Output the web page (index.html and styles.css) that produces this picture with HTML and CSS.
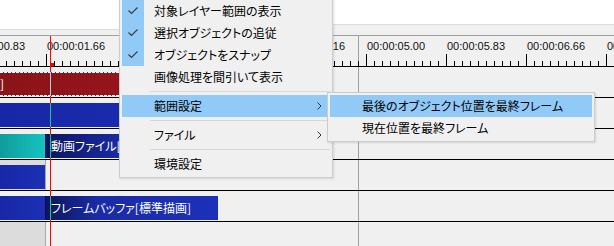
FILE: index.html
```html
<!DOCTYPE html>
<html lang="ja">
<head>
    <meta charset="UTF-8">
    <title>タイムライン</title>
    <link rel="stylesheet" href="styles.css">
</head>
<body>

<div class="timeline">
    <div class="topbar">
        <div class="top-left"></div>
        <div class="top-right"></div>
    </div>

    <!-- 最終フレームの線 -->
    <div class="end-line"></div>

    <div class="ruler">
        <div class="labels">
            <span>00:00:00.83</span>
            <span>00:00:01.66</span>
            <span>00:00:02.50</span>
            <span>00:00:03.33</span>
            <span>00:00:04.16</span>
            <span>00:00:05.00</span>
            <span>00:00:05.83</span>
            <span>00:00:06.66</span>
            <span>00:00:07.50</span>
        </div>
        <div class="ticks"></div>
    </div>

    <div class="layer">
        <div class="obj obj-red obj-cut" style="width: 300px">]<span class="cur cur-cyan" style="left: 50px"></span></div>
    </div>
    <div class="layer">
        <div class="obj obj-blue" style="width: 300px"><span class="cur cur-green" style="left: 50px"></span></div>
    </div>
    <div class="layer">
        <div class="obj obj-teal" style="width: 45px"></div>
        <div class="obj obj-navy" style="width: 255px">動画ファイル[標準描画]<span class="cur cur-green" style="left: 5px"></span></div>
    </div>
    <div class="layer layer-dim">
        <div class="obj obj-blue" style="width: 45px"></div>
    </div>
    <div class="layer">
        <div class="obj obj-blue" style="width: 45px"></div>
        <div class="obj obj-navy" style="width: 173px">フレームバッファ[標準描画]<span class="cur cur-green" style="left: 5px"></span></div>
    </div>
    <div class="layer layer-dim"></div>

    <div class="cursor"><span class="cursor-head"></span></div>
</div>

<div class="menu">
    <div class="item checked">
        <span class="check"><svg width="10" height="8" viewBox="0 0 10 8"><polyline points="0.5,3.5 3.5,6.5 9.5,0.5" fill="none" stroke="#3c3c3c" stroke-width="1.2"/></svg></span>
        <span class="label">対象レイヤー範囲の表示</span>
    </div>
    <div class="item checked">
        <span class="check"><svg width="10" height="8" viewBox="0 0 10 8"><polyline points="0.5,3.5 3.5,6.5 9.5,0.5" fill="none" stroke="#3c3c3c" stroke-width="1.2"/></svg></span>
        <span class="label">選択オブジェクトの追従</span>
    </div>
    <div class="item checked">
        <span class="check"><svg width="10" height="8" viewBox="0 0 10 8"><polyline points="0.5,3.5 3.5,6.5 9.5,0.5" fill="none" stroke="#3c3c3c" stroke-width="1.2"/></svg></span>
        <span class="label">オブジェクトをスナップ</span>
    </div>
    <div class="item">
        <span class="check"></span>
        <span class="label">画像処理を間引いて表示</span>
    </div>
    <div class="sep"></div>
    <div class="item active">
        <span class="check"></span>
        <span class="label">範囲設定</span>
        <svg class="arrow" width="5" height="8" viewBox="0 0 5 8"><polyline points="0.5,0.5 4,4 0.5,7.5" fill="none" stroke="#333" stroke-width="1"/></svg>
    </div>
    <div class="sep"></div>
    <div class="item">
        <span class="check"></span>
        <span class="label">ファイル</span>
        <svg class="arrow" width="5" height="8" viewBox="0 0 5 8"><polyline points="0.5,0.5 4,4 0.5,7.5" fill="none" stroke="#333" stroke-width="1"/></svg>
    </div>
    <div class="sep"></div>
    <div class="item">
        <span class="check"></span>
        <span class="label">環境設定</span>
    </div>
</div>

<div class="menu submenu">
    <div class="item active">
        <span class="check"></span>
        <span class="label">最後のオブジェクト位置を最終フレーム</span>
    </div>
    <div class="item">
        <span class="check"></span>
        <span class="label">現在位置を最終フレーム</span>
    </div>
</div>

</body>
</html>
```

FILE: styles.css
```css
body {
    margin: 0;
    width: 614px;
    height: 246px;
    overflow: hidden;
    background: #f0f0f0;
    font-family: "Noto Sans CJK JP", sans-serif;
    font-feature-settings: "palt";
}
.timeline {
    position: relative;
    height: 246px;
    overflow: hidden;
}
.topbar {
    display: flex;
    height: 35px;
}
.top-left {
    width: 119px;
    height: 29px;
    background: #fff;
    border-bottom: 1px solid #dcdcdc;
}
.top-right {
    flex: 1;
    height: 24px;
    background: #fff;
    border-bottom: 1px solid #dcdcdc;
}
.end-line {
    position: absolute;
    left: 358px;
    top: 36px;
    bottom: 0;
    width: 1px;
    background: #a0a0a0;
}
.ruler {
    position: relative;
    height: 30px;
    border-top: 1px solid #a0a0a0;
    border-bottom: 1px solid #000;
    display: flex;
    flex-direction: column;
    justify-content: space-between;
}
.labels {
    display: flex;
    margin-top: 4px;
    margin-left: -33px;
    font: 11px/12px "Liberation Sans", sans-serif;
    color: #111;
    white-space: nowrap;
}
.labels span {
    flex: 0 0 80px;
}
.ticks {
    height: 12px;
    background-image: linear-gradient(to right, #000 1px, transparent 1px),
                      linear-gradient(to right, #000 1px, transparent 1px);
    background-size: 80px 12px, 8px 5px;
    background-position: 46px 100%, 6px 100%;
    background-repeat: repeat-x;
}
.layer {
    position: relative;
    display: flex;
    align-items: flex-start;
    height: 30px;
    border-bottom: 1px solid #000;
}
.layer-dim {
    background: linear-gradient(to right, #dcdcdc 45px, #a8a8a8 45px 46px, transparent 46px);
}
.obj {
    position: relative;
    flex-shrink: 0;
    box-sizing: border-box;
    height: 24px;
    margin-top: 5px;
    padding-left: 6px;
    color: #fff;
    font-size: 12px;
    line-height: 24px;
    white-space: nowrap;
    overflow: hidden;
}
.obj-cut {
    padding-left: 0;
}
.obj-red {
    background:
        repeating-linear-gradient(to right, #fff 0 3px, transparent 3px 4px) top / 100% 1px no-repeat,
        repeating-linear-gradient(to right, #fff 0 3px, transparent 3px 4px) bottom / 100% 1px no-repeat,
        linear-gradient(to right, #8a1419, #a6151f);
}
.obj-blue {
    background: linear-gradient(to right, #1728a6, #1b30b6);
}
.obj-teal {
    background: linear-gradient(to right, #0f9c9b, #17c3bf);
}
.obj-navy {
    border-left: 1px solid #0a1048;
    padding-left: 5px;
    background: linear-gradient(to right, #0e1660, #1a2ba6 30%, #1c31b8);
}
.cur {
    position: absolute;
    top: 0;
    bottom: 0;
    width: 1px;
    z-index: 1;
}
.obj-navy .cur {
    margin-left: -1px;
}
.cur-cyan {
    background: #8fe0e0;
}
.cur-green {
    background: #22c870;
}
.cursor {
    position: absolute;
    left: 50px;
    top: 36px;
    bottom: 0;
    width: 1px;
    background: #f00;
}
.cursor-head {
    position: absolute;
    left: 0;
    top: 27px;
    width: 4px;
    height: 3px;
    background: #f00;
}

/* menú contextual */
.menu {
    position: absolute;
    left: 119px;
    top: -3px;
    width: 214px;
    box-sizing: border-box;
    padding: 2px;
    background: #f0f0f0;
    border: 1px solid #ccc;
    box-shadow: 1px 1px 2px rgba(0, 0, 0, 0.12);
    z-index: 5;
}
.submenu {
    left: 327px;
    top: 92px;
    width: 268px;
    z-index: 6;
}
.item {
    display: flex;
    align-items: center;
    height: 22px;
}
.check {
    flex: none;
    width: 22px;
    height: 22px;
    display: flex;
    align-items: center;
    justify-content: center;
}
.checked .check {
    background: #91c9f7;
}
.label {
    flex: 1;
    margin-left: 10px;
    font-size: 12px;
    line-height: 22px;
    color: #000;
    white-space: nowrap;
}
.active {
    background: #91c9f7;
}
.arrow {
    margin-right: 8px;
}
.sep {
    height: 1px;
    margin: 3px 0 3px 28px;
    background: #d7d7d7;
}
```
